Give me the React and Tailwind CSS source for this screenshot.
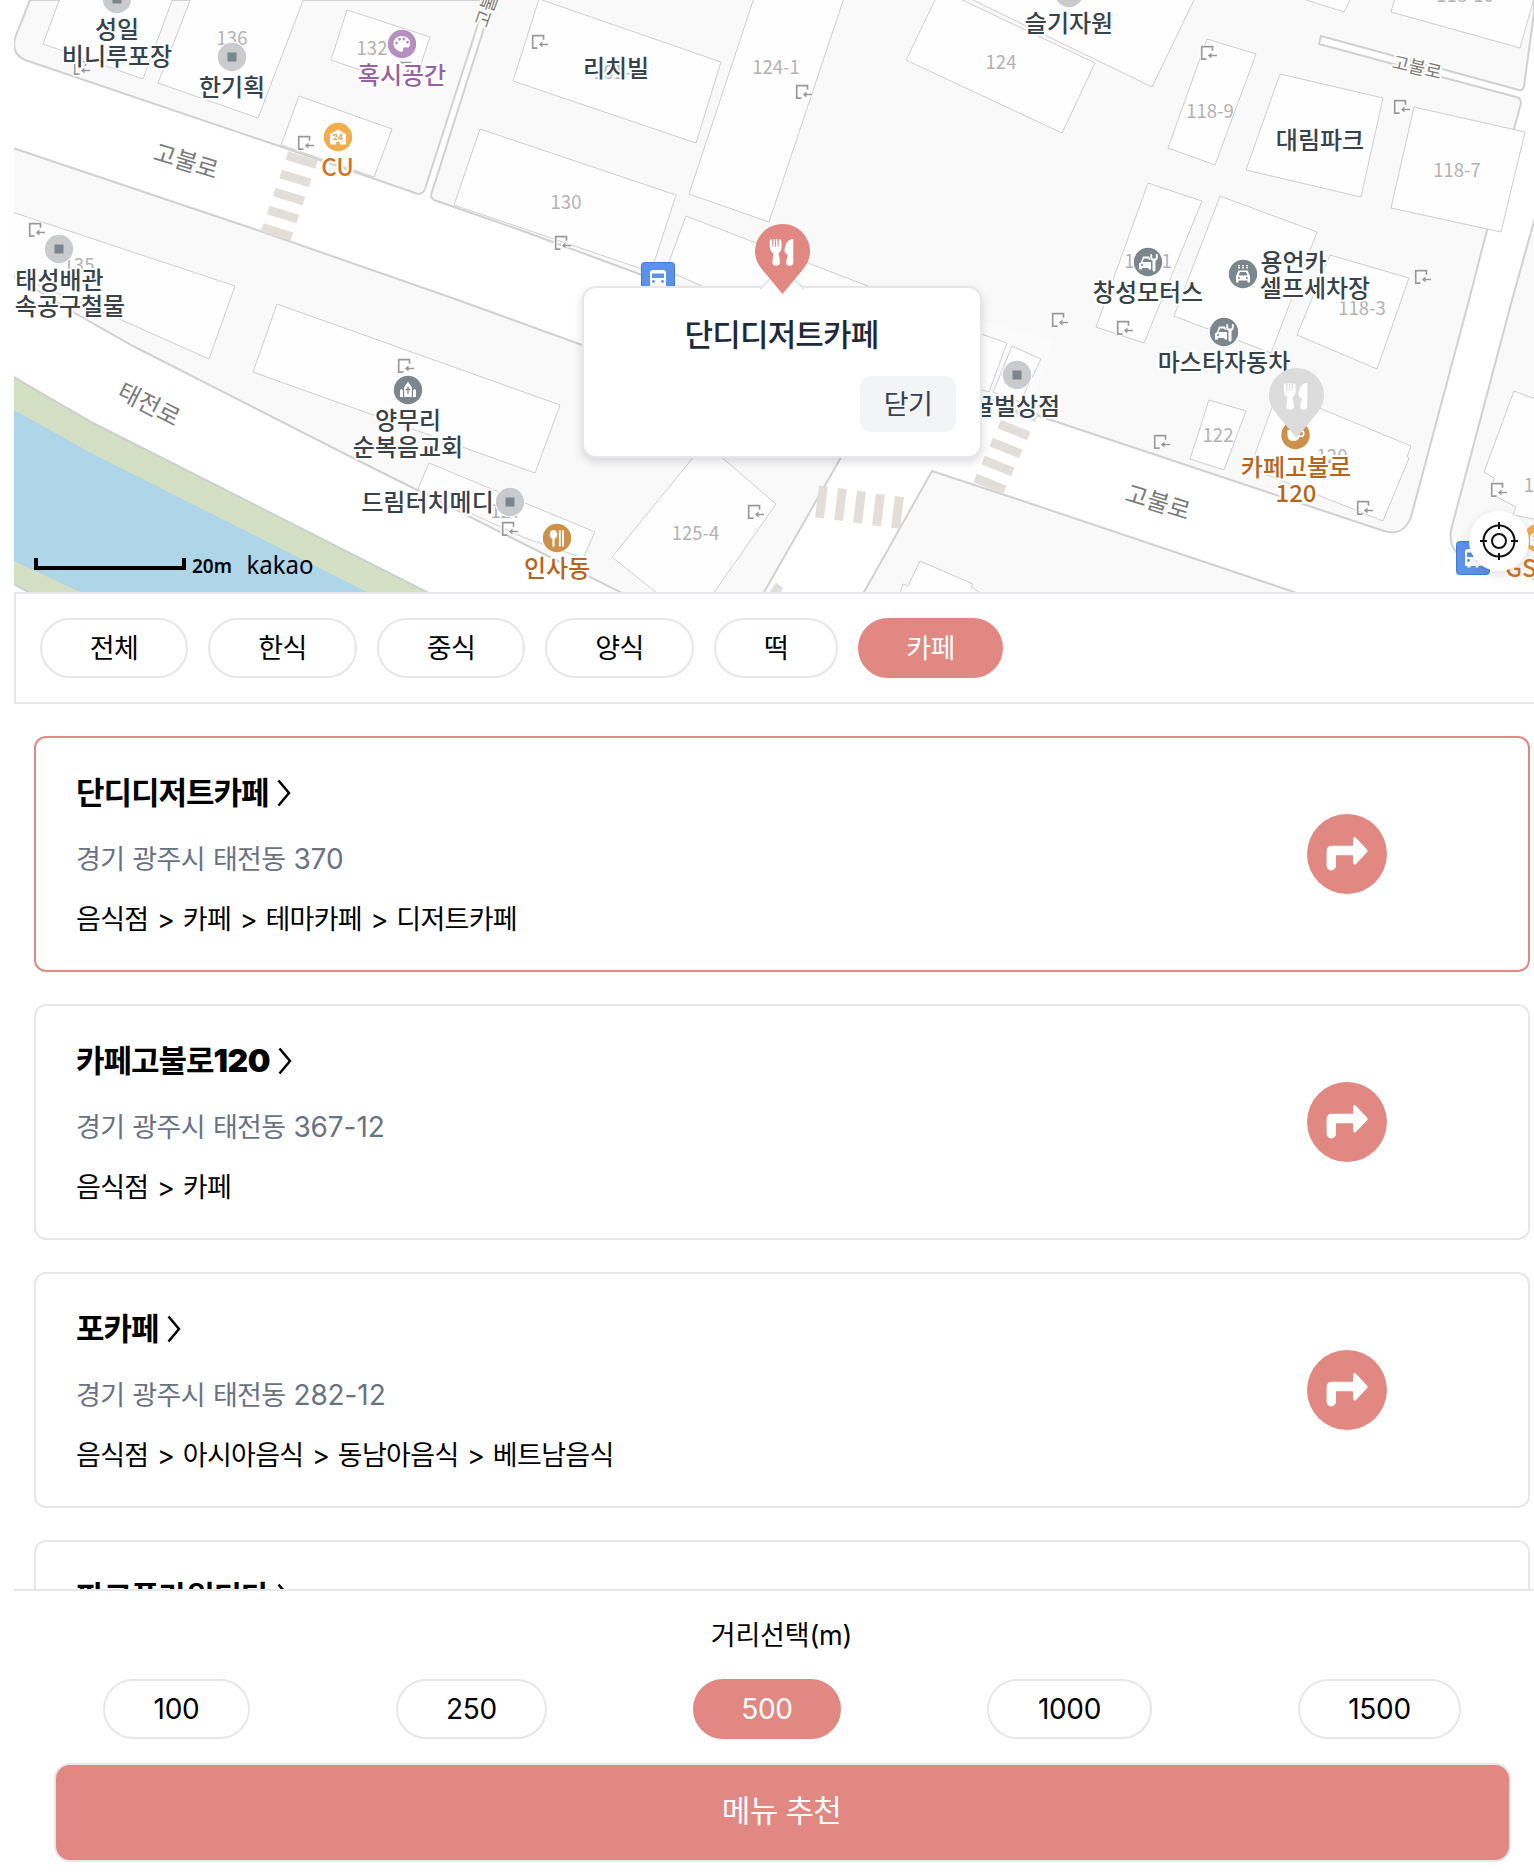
import React from "react";

const UI_FONT = "font-['Inter','Noto_Sans_CJK_KR',sans-serif]";
const MAP_FONT = "font-['Noto_Sans_CJK_KR',sans-serif]";

/* ---------- map data ---------- */

const blocks = [
  "M30 0L15 38Q11 54 25 60L282 147L418 194Q423 194 425 189L477 27L486 0Z",
  "M493 0L484 28L431 195Q431 198 434 200L520 230L642 275L1039 416L1384 531Q1403 537 1411 517L1469 300L1487 230L1514 129L1521 103Q1521 98 1516 97L1319 44L1321 36L1519 90Q1523 91 1524 86L1534 13V-5H493Z",
  "M10 147L260 231L458 300L582 345L852 438L763 594H624L510 537L417 490L355 459L133 346L73 312L10 274Z",
  "M863 594L932 471L1020 500L1300 594Z",
  "M1536 214L1512 300L1451 530Q1449 545 1457 553L1536 580Z",
];

const buildings = [
  "60,-2 43,44 143,79 173,-2",
  "191,-2 158,83 258,118 304,-2",
  "347,10 430,37 413,88 331,60",
  "299,96 392,129 374,177 281,145",
  "480,129 676,195 651,272 454,205",
  "539,-1 721,62 696,143 513,81",
  "754,-2 689,194 769,222 844,-2",
  "686,216 930,310 800,330 666,270",
  "936,-2 906,60 1062,133 1095,63 958,-2",
  "969,-2 1014,20 1152,87 1195,-2",
  "1207,39 1256,54 1215,165 1168,148",
  "1280,74 1383,98 1361,197 1246,170",
  "1414,107 1525,132 1501,232 1391,208",
  "1300,-2 1344,12 1351,-2",
  "1395,-2 1391,12 1520,48 1534,-2",
  "1148,183 1202,201 1144,343 1096,327",
  "1220,196 1317,232 1271,353 1174,316",
  "1330,255 1409,278 1377,369 1297,335",
  "1209,400 1246,411 1224,470 1190,459",
  "1278,391 1411,446 1407,457 1409,458 1383,521 1250,468",
  "1514,391 1538,400 1538,520 1513,515 1516,507 1491,494 1494,478 1484,472",
  "970,330 1007,343 989,392 970,386",
  "1012,346 1041,359 1020,402 993,392",
  "12,212 235,286 209,359 117,318 12,274",
  "277,304 560,405 535,473 253,372",
  "429,463 595,532 583,558 525,538 418,489",
  "705,443 776,504 713,594 658,594 612,557",
  "920,561 973,584 971,587 982,594 900,594 903,584 908,586",
];

const crossings = [
  [301.7, 160, 31, 9, 17], [295.5, 178.5, 31, 9, 17], [289, 196.5, 31, 9, 17], [283, 214.5, 31, 9, 17], [277, 232, 31, 9, 17],
  [821.5, 502, 9, 32, 7], [840.5, 504.5, 9, 32, 7], [859.5, 507, 9, 32, 7], [878.5, 510, 9, 32, 7], [897.5, 512.5, 9, 32, 7],
  [1022, 412, 32, 9, 22], [1014, 430, 32, 9, 22], [1006, 448, 32, 9, 22], [998, 466, 32, 9, 22], [990, 484, 32, 9, 22],
  [775, 592, 9, 16, 35],
];

const lots = [
  ["136", 232, 44.5], ["132", 372, 55], ["135", 79, 272], ["101-1", 617, 79], ["130", 566, 208.5], ["124-1", 776, 73.5], ["124", 1001, 68.5],
  ["118-9", 1210, 118], ["118-7", 1457, 176.5], ["118-3", 1362, 314.5], ["118-10", 1465, 2], ["118-1", 1148, 268],
  ["122", 1218, 441.5], ["120", 1332, 463], ["125-4", 695.5, 540], ["127", 506, 518], ["12", 1534, 491.5],
];

const entrances = [
  [74, 61], [298, 136], [29, 223], [532, 35], [796, 85], [555, 236], [1201, 46], [1394, 100], [1415, 270],
  [1052, 313], [1117, 321], [1154, 435], [1357, 501], [1491, 483], [748, 505], [502, 522], [398, 359], [399, 62],
];

const DARK = "#37424a";
const BROWN = "#b5651d";
const labels = [
  ["성일", 117, 38, DARK], ["비니루포장", 117, 64.5, DARK], ["한기획", 232, 96, DARK], ["혹시공간", 402, 83.5, "#9563a2"],
  ["CU", 337.5, 176, "#cf7427"], ["리치빌", 616, 77, DARK], ["슬기자원", 1069, 32, DARK], ["대림파크", 1320, 149, DARK],
  ["창성모터스", 1148, 300.5, DARK], ["용언카", 1293.5, 270.5, DARK], ["셀프세차장", 1315, 296.5, DARK], ["마스타자동차", 1224, 371, DARK],
  ["꿀벌상점", 1016, 414.5, DARK], ["카페고불로", 1296, 475.5, BROWN], ["120", 1296, 501.5, BROWN], ["양무리", 408, 429, DARK],
  ["순복음교회", 408, 455.5, DARK], ["드림터치메디", 427.5, 510.5, DARK], ["인사동", 557, 576.5, BROWN], ["태성배관", 59.5, 288.5, DARK],
  ["속공구철물", 70, 314.5, DARK], ["GS", 1521, 576.5, "#cf7427"],
];

const roads = [
  ["고불로", 186, 161.5, 17, 24], ["태전로", 149, 404.5, 27, 24], ["고불로", 1158, 502.5, 17, 24], ["고불로", 1417, 67.5, 13, 18],
  ["고불로", 489, 3, -71, 18],
];

const squares = [[117, -1], [232, 57], [59, 249], [510, 502], [1069, -7], [1017, 375]];

/* ---------- map symbols ---------- */

function Badge({ x, y, fill, children }) {
  return (
    <g transform={`translate(${x} ${y})`}>
      <circle r="15.2" fill="#fff" />
      <circle r="14.2" fill={fill} />
      {children}
    </g>
  );
}

function Bus({ x, y }) {
  return (
    <g transform={`translate(${x} ${y})`}>
      <rect x="0.5" y="0.5" width="33" height="33" rx="3" fill="#5c92ea" stroke="#3f7bd6" />
      <path d="M9 11q0-3 3-3h10q3 0 3 3v14h-2.500v1.500h-3V25h-5v1.500h-3V25H9z" fill="#fff" />
      <rect x="11" y="11.500" width="12" height="4.500" fill="#5c92ea" />
      <circle cx="12.500" cy="19.500" r="1.400" fill="#5c92ea" />
      <circle cx="21.500" cy="19.500" r="1.400" fill="#5c92ea" />
    </g>
  );
}

function RepairCar({ x, y }) {
  return (
    <Badge x={x} y={y} fill="#7b878d">
      <path d="M-9 7.500V1.500L-7 0L-5-5.500H1L2.500-2H1.500L0-3.500H-4L-5.500 0H3V7.500H0.500V6H-6V7.500Z" fill="#fff" />
      <circle cx="-6" cy="3" r="1.100" fill="#7b878d" />
      <path d="M6 8V-2" stroke="#fff" strokeWidth="3" strokeLinecap="round" />
      <path d="M3.200-7v2.500q0 2.300 2.800 2.300t2.800-2.300V-7" stroke="#fff" strokeWidth="1.900" fill="none" strokeLinecap="round" />
    </Badge>
  );
}

function StoreBadge({ x, y }) {
  return (
    <Badge x={x} y={y} fill="#f1ac4b">
      <path d="M-8 7.500V-3L0-7.500L8-3V7.500H1.800V5.500Q0 3.500-1.800 5.500V7.500Z" fill="#fff" />
      <text y="3" textAnchor="middle" fontSize="8" fontWeight="700" fill="#f1a238" className="font-['Inter',sans-serif]">24</text>
    </Badge>
  );
}

function Pin({ x, y, fill }) {
  return (
    <g transform={`translate(${x} ${y})`}>
      <path d="M27.500 0C12.300 0 0 12.300 0 27.500C0 34.500 3 40.500 7.500 46L27.500 70L47.500 46C52 40.500 55 34.500 55 27.500C55 12.300 42.700 0 27.500 0Z" fill={fill} />
      <path d="M15 15.500H17L17.500 23H18.200L18.600 15H19.900L20.100 23H20.900L21.100 15H22.400L22.800 23H23.500L24 15.500H26Q27.200 22 26.200 25.500Q25.500 28 23.600 29.200L25 38Q25.200 41.700 21.500 41.700Q17.200 41.700 17.400 38L18.400 29.200Q15.800 28 15.200 25Q14.300 21 15 15.500Z" fill="#fff" />
      <path d="M38.300 38V17Q39 14.200 36 15.200Q31 17 29.600 25Q29 29.500 32.800 30.200L31.200 38Q31 41.700 34.500 41.700Q38.500 41.700 38.300 38Z" fill="#fff" />
    </g>
  );
}

function MapCanvas() {
  return (
    <svg className={`block ${MAP_FONT}`} width="1520" height="592" viewBox="14 0 1520 592">
      <rect x="14" width="1520" height="592" fill="#fff" />
      {blocks.map((d) => (
        <path key={d} d={d} fill="#f9f9f9" stroke="#d1d1d1" strokeWidth="2" />
      ))}
      <path d="M982 320L1053 342L1030 412L975 392Z" fill="#fbfbfb" />
      <path d="M12 376L93 423L427 592V600H0V560Z" fill="#d3e0c4" stroke="#cfcfcf" strokeWidth="2" />
      <path d="M14 410L93 454L367 592H80L14 561Z" fill="#afd5e9" />
      <path d="M10 582L32 594H10Z" fill="#fff" stroke="#cfcfcf" strokeWidth="2" />
      <g fill="#e2deda">
        {crossings.map(([x, y, w, h, r]) => (
          <rect key={`${x}-${y}`} x={x - w / 2} y={y - h / 2} width={w} height={h} transform={`rotate(${r} ${x} ${y})`} />
        ))}
      </g>
      <g fill="#fefefe" stroke="#cecece" strokeWidth="1">
        {buildings.map((p) => (
          <polygon key={p} points={p} />
        ))}
      </g>
      <g fill="#b2b2b2" fontSize="18.500" textAnchor="middle">
        {lots.map(([t, x, y]) => (
          <text key={t + x} x={x} y={y}>{t}</text>
        ))}
      </g>
      {entrances.map(([x, y]) => (
        <g key={`${x}-${y}`} transform={`translate(${x} ${y})`} fill="none">
          <path d="M11.500 4.700V0.700H0.700V13.200H5.500M16 9.500H8.500M10.500 7.500L8.500 9.500L10.500 11.500" stroke="#fff" strokeWidth="4" />
          <path d="M11.500 4.700V0.700H0.700V13.200H5.500M16 9.500H8" stroke="#999" strokeWidth="1.700" />
          <path d="M6.800 9.500L10.500 6.500V12.500Z" fill="#999" />
        </g>
      ))}
      {roads.map(([t, x, y, r, s]) => (
        <text key={`${x}-${y}`} transform={`translate(${x} ${y}) rotate(${r})`} dy="0.350em" fontSize={s} textAnchor="middle" fill="#7b7b7b" stroke="#fff" strokeWidth="4" paintOrder="stroke" strokeLinejoin="round">{t}</text>
      ))}
      {squares.map(([x, y]) => (
        <Badge key={`${x}-${y}`} x={x} y={y} fill="#cacbcf">
          <rect x="-4.500" y="-4.500" width="9" height="9" fill="#7b878c" />
        </Badge>
      ))}
      <Badge x={402} y={44} fill="#b690bd">
        <path d="M0-8C-5-8-8.500-4.500-8.500-0.500S-5 7-1.500 7.500C0 8 1 7.500 1 6C1 3.500 2 3 4.500 3.500C7.500 4 8.500 1.500 8-1.500C7.500-5.500 4-8 0-8Z" fill="#fff" />
        {[[-5.5, -1], [-2.5, -4.7], [2, -5], [5.5, -1.8]].map(([cx, cy]) => (
          <circle key={cx} cx={cx} cy={cy} r="1.400" fill="#b690bd" />
        ))}
      </Badge>
      <StoreBadge x={338} y={137} />
      <StoreBadge x={1538} y={538} />
      <Badge x={408} y={390} fill="#7b878d">
        <path d="M-8 7V0.500Q-6.500-3-5 0.500V7ZM5 7V0.500Q6.500-3 8 0.500V7ZM-3.800 7V-3L0-8L3.800-3V7Z" fill="#fff" />
        <path d="M0-3.500V4M-2.300-0.500H2.300" stroke="#7b878d" strokeWidth="1.300" />
      </Badge>
      <Badge x={557} y={538} fill="#cd9149">
        <ellipse cx="-3.500" cy="-3.500" rx="3.800" ry="4.500" fill="#fff" />
        <path d="M-3.500-1V8.500" stroke="#fff" strokeWidth="2.200" />
        <path d="M2.800-7.800V8.500M6-7.800V8.500" stroke="#fff" strokeWidth="1.900" />
      </Badge>
      <RepairCar x={1148} y={262} />
      <RepairCar x={1224} y={332} />
      <Badge x={1243} y={274} fill="#7b878d">
        <path d="M-7 8.500V2L-4.500-3.500H4.500L7 2V8.500H4.500V6.500H-4.500V8.500Z" fill="#fff" />
        <path d="M-4.500 1.500L-3-2H3L4.500 1.500Z" fill="#7b878d" />
        <circle cx="-4" cy="4" r="1" fill="#7b878d" />
        <circle cx="4" cy="4" r="1" fill="#7b878d" />
        <path d="M-4-9V-5.500M0-9V-5.500M4-9V-5.500" stroke="#fff" strokeWidth="1.700" strokeDasharray="1.500 0.500" />
      </Badge>
      <Badge x={1295.5} y={435} fill="#cd9149">
        <path d="M-8-5H4V0Q4 6-2 6T-8 0Z" fill="#fff" />
        <circle cx="5.500" cy="-1.500" r="2.800" fill="none" stroke="#fff" strokeWidth="1.700" />
      </Badge>
      <Bus x={641} y={262} />
      <Bus x={1456} y={541} />
      <g fontSize="24" fontWeight="500" textAnchor="middle" stroke="#fff" strokeWidth="4" strokeLinejoin="round" paintOrder="stroke">
        {labels.map(([t, x, y, c]) => (
          <text key={t + y} x={x} y={y} fill={c}>{t}</text>
        ))}
      </g>
      <path d="M36 558V568H184V558" fill="none" stroke="#000" strokeWidth="4" />
      <text x="192" y="573" fontSize="20" fontWeight="600" textLength="40" lengthAdjust="spacingAndGlyphs" className="font-['Noto_Sans',sans-serif]">20m</text>
      <text x="246.500" y="573.500" fontSize="26" textLength="67" lengthAdjust="spacingAndGlyphs" className="font-['Noto_Sans',sans-serif]">kakao</text>
      <Pin x={1269} y={368} fill="#dcdcdc" />
    </svg>
  );
}

function InfoWindow() {
  return (
    <div className="absolute left-[568px] top-[286px] h-[172px] w-[400px] rounded-[14px] border-2 border-gray-200 bg-white shadow-[0_4px_10px_rgba(0,0,0,0.14)]">
      <svg className="absolute -top-[18px] left-[172px]" width="52" height="22" viewBox="0 0 52 22">
        <path d="M2 21L26-3L50 21Z" fill="#fff" />
        <path d="M4 19L26-3L48 19" fill="none" stroke="#e5e7eb" strokeWidth="2" />
      </svg>
      <div className="flex h-full flex-col items-end justify-between pb-6 pr-6 pt-[25px]">
        <p className="w-full pl-[23px] text-center text-[31px] font-medium leading-[44px] tracking-[-0.800px] text-gray-800">단디디저트카페</p>
        <button className="h-14 w-24 rounded-xl bg-gray-100 pt-px text-[27px] leading-10 tracking-[-0.700px] text-gray-700">닫기</button>
      </div>
    </div>
  );
}

function MapPanel() {
  return (
    <section className="relative h-[592px] w-[1520px] shrink-0 overflow-hidden">
      <MapCanvas />
      <InfoWindow />
      <svg className="absolute left-[741px] top-[224px]" width="55" height="70" viewBox="0 0 55 70">
        <Pin x={0} y={0} fill="#e18883" />
      </svg>
      <button className="absolute left-[1455px] top-[511px] flex size-[60px] items-center justify-center rounded-full bg-white shadow-[0_4px_12px_rgba(0,0,0,0.12)]">
        <svg width="40" height="40" viewBox="0 0 40 40" fill="none" stroke="#111" strokeWidth="2">
          <circle cx="20" cy="20" r="15.500" />
          <circle cx="20" cy="20" r="7" />
          <path d="M20 1V8M20 32V39M1 20H8M32 20H39" />
        </svg>
      </button>
    </section>
  );
}

/* ---------- filters and list ---------- */

const categories = [
  { name: "전체", width: "w-[148px]" },
  { name: "한식", width: "w-[149px]" },
  { name: "중식", width: "w-[148px]" },
  { name: "양식", width: "w-[149px]" },
  { name: "떡", width: "w-[124px]" },
  { name: "카페", width: "w-[145px]", active: true },
];

const distances = [
  { m: "100", width: "w-[147px]" },
  { m: "250", width: "w-[151px]" },
  { m: "500", width: "w-[148px]", active: true },
  { m: "1000", width: "w-[165px]" },
  { m: "1500", width: "w-[163px]" },
];

const places = [
  { name: "단디디저트카페", address: "경기 광주시 태전동 370", kind: "음식점 > 카페 > 테마카페 > 디저트카페", selected: true },
  { name: "카페고불로120", address: "경기 광주시 태전동 367-12", kind: "음식점 > 카페" },
  { name: "포카페", address: "경기 광주시 태전동 282-12", kind: "음식점 > 아시아음식 > 동남아음식 > 베트남음식" },
  { name: "파크플라워디다", address: "경기 광주시 태전동", kind: "음식점 > 카페" },
];

function Mixed({ text, digits }) {
  return text.split(/([\d-]+)/).filter(Boolean).map((part, i) =>
    /^\d/.test(part) ? <span key={i} className={digits}>{part}</span> : <React.Fragment key={i}>{part}</React.Fragment>
  );
}

function Chip({ children, active, width, type }) {
  return (
    <button
      className={`h-[60px] shrink-0 rounded-full border-2 leading-10 ${type} ${width} ${
        active ? "border-[#e18883] bg-[#e18883] text-white" : "border-gray-200 bg-white text-black"
      }`}
    >
      {children}
    </button>
  );
}

function PlaceCard({ place }) {
  return (
    <article className={`flex h-[236px] w-[1496px] shrink-0 items-center justify-between rounded-xl border-2 pl-10 pr-[141px] ${place.selected ? "border-[#e18883]" : "border-gray-200"}`}>
      <div className="flex flex-col pt-px">
        <h2 className="flex items-center text-[31px] font-bold leading-[46px] text-black">
          <span className="tracking-[-1px]">
            <Mixed text={place.name} digits="font-black text-[32px] tracking-[-0.500px]" />
          </span>
          <svg className="ml-2" width="15" height="28" viewBox="0 0 15 28" fill="none" stroke="#000" strokeWidth="2.500">
            <path d="M1.500 1.500L12 14L1.500 26.500" />
          </svg>
        </h2>
        <p className="mt-[23px] text-[27px] leading-10 tracking-[-0.700px] text-gray-500 [word-spacing:1.200px]">
          <Mixed text={place.address} digits="text-[28px] tracking-[-0.100px]" />
        </p>
        <p className="mt-5 text-[27px] leading-10 tracking-[-0.700px] text-black [word-spacing:1.700px]">{place.kind}</p>
      </div>
      <svg width="80" height="80" viewBox="0 0 80 80">
        <circle cx="40" cy="40" r="40" fill="#e18883" />
        <path d="M24.300 51.800V36.500H50" fill="none" stroke="#fff" strokeWidth="9.400" strokeLinecap="round" strokeLinejoin="round" />
        <path d="M47.700 24.800V48.800L59 36.800Z" fill="#fff" stroke="#fff" strokeWidth="3.400" strokeLinejoin="round" />
      </svg>
    </article>
  );
}

export default function App() {
  return (
    <main className={`flex h-[1872px] w-[1534px] flex-col overflow-hidden bg-white pl-[14px] ${UI_FONT}`}>
      <MapPanel />
      <nav className="flex h-[112px] shrink-0 items-center gap-5 border-y-2 border-l-2 border-gray-200 pl-6">
        {categories.map((c) => (
          <Chip key={c.name} width={c.width} active={c.active} type="pt-px text-[27px] tracking-[-0.700px]">{c.name}</Chip>
        ))}
      </nav>
      <section className="flex h-[885px] shrink-0 flex-col gap-8 overflow-hidden pl-5 pt-8">
        {places.map((p) => (
          <PlaceCard key={p.name} place={p} />
        ))}
      </section>
      <footer className="flex flex-1 flex-col border-t-2 border-gray-200">
        <h3 className="mt-[25px] h-10 pl-[15px] text-center text-[27px] leading-10 tracking-[-0.200px] text-black">거리선택(m)</h3>
        <div className="mt-[23px] flex gap-[146px] pl-[89px]">
          {distances.map((d) => (
            <Chip key={d.m} width={d.width} active={d.active} type="text-[28px] tracking-[-0.300px]">{d.m}</Chip>
          ))}
        </div>
        <button className="ml-10 mt-6 h-[99px] w-[1457px] rounded-2xl border-2 border-gray-200 bg-[#e18883] pb-[3px] pr-0.5 text-[31px] leading-[44px] tracking-[-0.700px] text-white">
          메뉴 추천
        </button>
      </footer>
    </main>
  );
}
